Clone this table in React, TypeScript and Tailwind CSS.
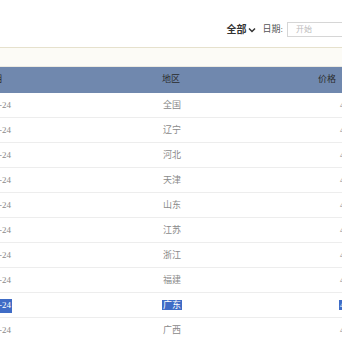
const rows = [
  { date: "2017-10-24", area: "全国", price: "4.15" },
  { date: "2017-10-24", area: "辽宁", price: "4.02" },
  { date: "2017-10-24", area: "河北", price: "4.21" },
  { date: "2017-10-24", area: "天津", price: "4.30" },
  { date: "2017-10-24", area: "山东", price: "4.18" },
  { date: "2017-10-24", area: "江苏", price: "4.36" },
  { date: "2017-10-24", area: "浙江", price: "4.47" },
  { date: "2017-10-24", area: "福建", price: "4.40" },
  { date: "2017-10-24", area: "广东", price: "4.52", selected: true },
  { date: "2017-10-24", area: "广西", price: "4.33" },
];

function Row({ date, area, price, selected }: { date: string; area: string; price: string; selected?: boolean }) {
  const hl = selected ? "bg-[#3f6cc6] text-white" : "";
  return (
    <div className="flex items-center h-[25px] pt-[2px] border-b border-[#ededed] text-[9px] text-[#8a8a8a] whitespace-nowrap">
      <div className="w-[162px] shrink-0 overflow-hidden">
        <span className={`-ml-[32px] inline-block px-[1px] ${hl}`}>{date}</span>
      </div>
      <div className="w-[177px] shrink-0">
        <span className={`px-[1px] ${hl}`}>{area}</span>
      </div>
      <div className="shrink-0">
        <span className={`px-[1px] ${hl}`}>{price}</span>
      </div>
    </div>
  );
}

export default function App() {
  return (
    <div
      className="w-[342px] h-[342px] overflow-hidden bg-white"
      style={{ fontFamily: '"Liberation Serif", "Noto Sans CJK SC", serif' }}
    >
      {/* toolbar */}
      <div className="h-[48px] flex items-center justify-end pt-[12px] border-b border-[#e6e1cd] whitespace-nowrap">
        <span className="text-[10px] font-bold text-[#333]">全部</span>
        <svg width="8" height="6" viewBox="0 0 8 6" className="ml-[2px] mt-[1px]">
          <path d="M1 1.5 L4 4.5 L7 1.5" fill="none" stroke="#333" strokeWidth="1.5" />
        </svg>
        <span className="ml-[6px] text-[9px] text-[#555]">日期:</span>
        <div className="ml-[4px] -mr-[12px] w-[67px] h-[15px] border border-[#d6d6d6] flex items-center pl-[8px] text-[8px] text-[#bbb]">
          开始
        </div>
      </div>
      <div className="h-[19px] bg-[#fcfbf6] border-b border-[#eceae2]" />

      {/* table header */}
      <div className="flex items-center h-[26px] bg-[#7088ae] text-[9px] text-[#2b2b2b] whitespace-nowrap">
        <div className="w-[162px] shrink-0 overflow-hidden">
          <span className="-ml-[16px] inline-block">日期</span>
        </div>
        <div className="w-[156px] shrink-0">地区</div>
        <div className="shrink-0">价格</div>
      </div>

      {rows.map((r, i) => (
        <Row key={i} {...r} />
      ))}
    </div>
  );
}
